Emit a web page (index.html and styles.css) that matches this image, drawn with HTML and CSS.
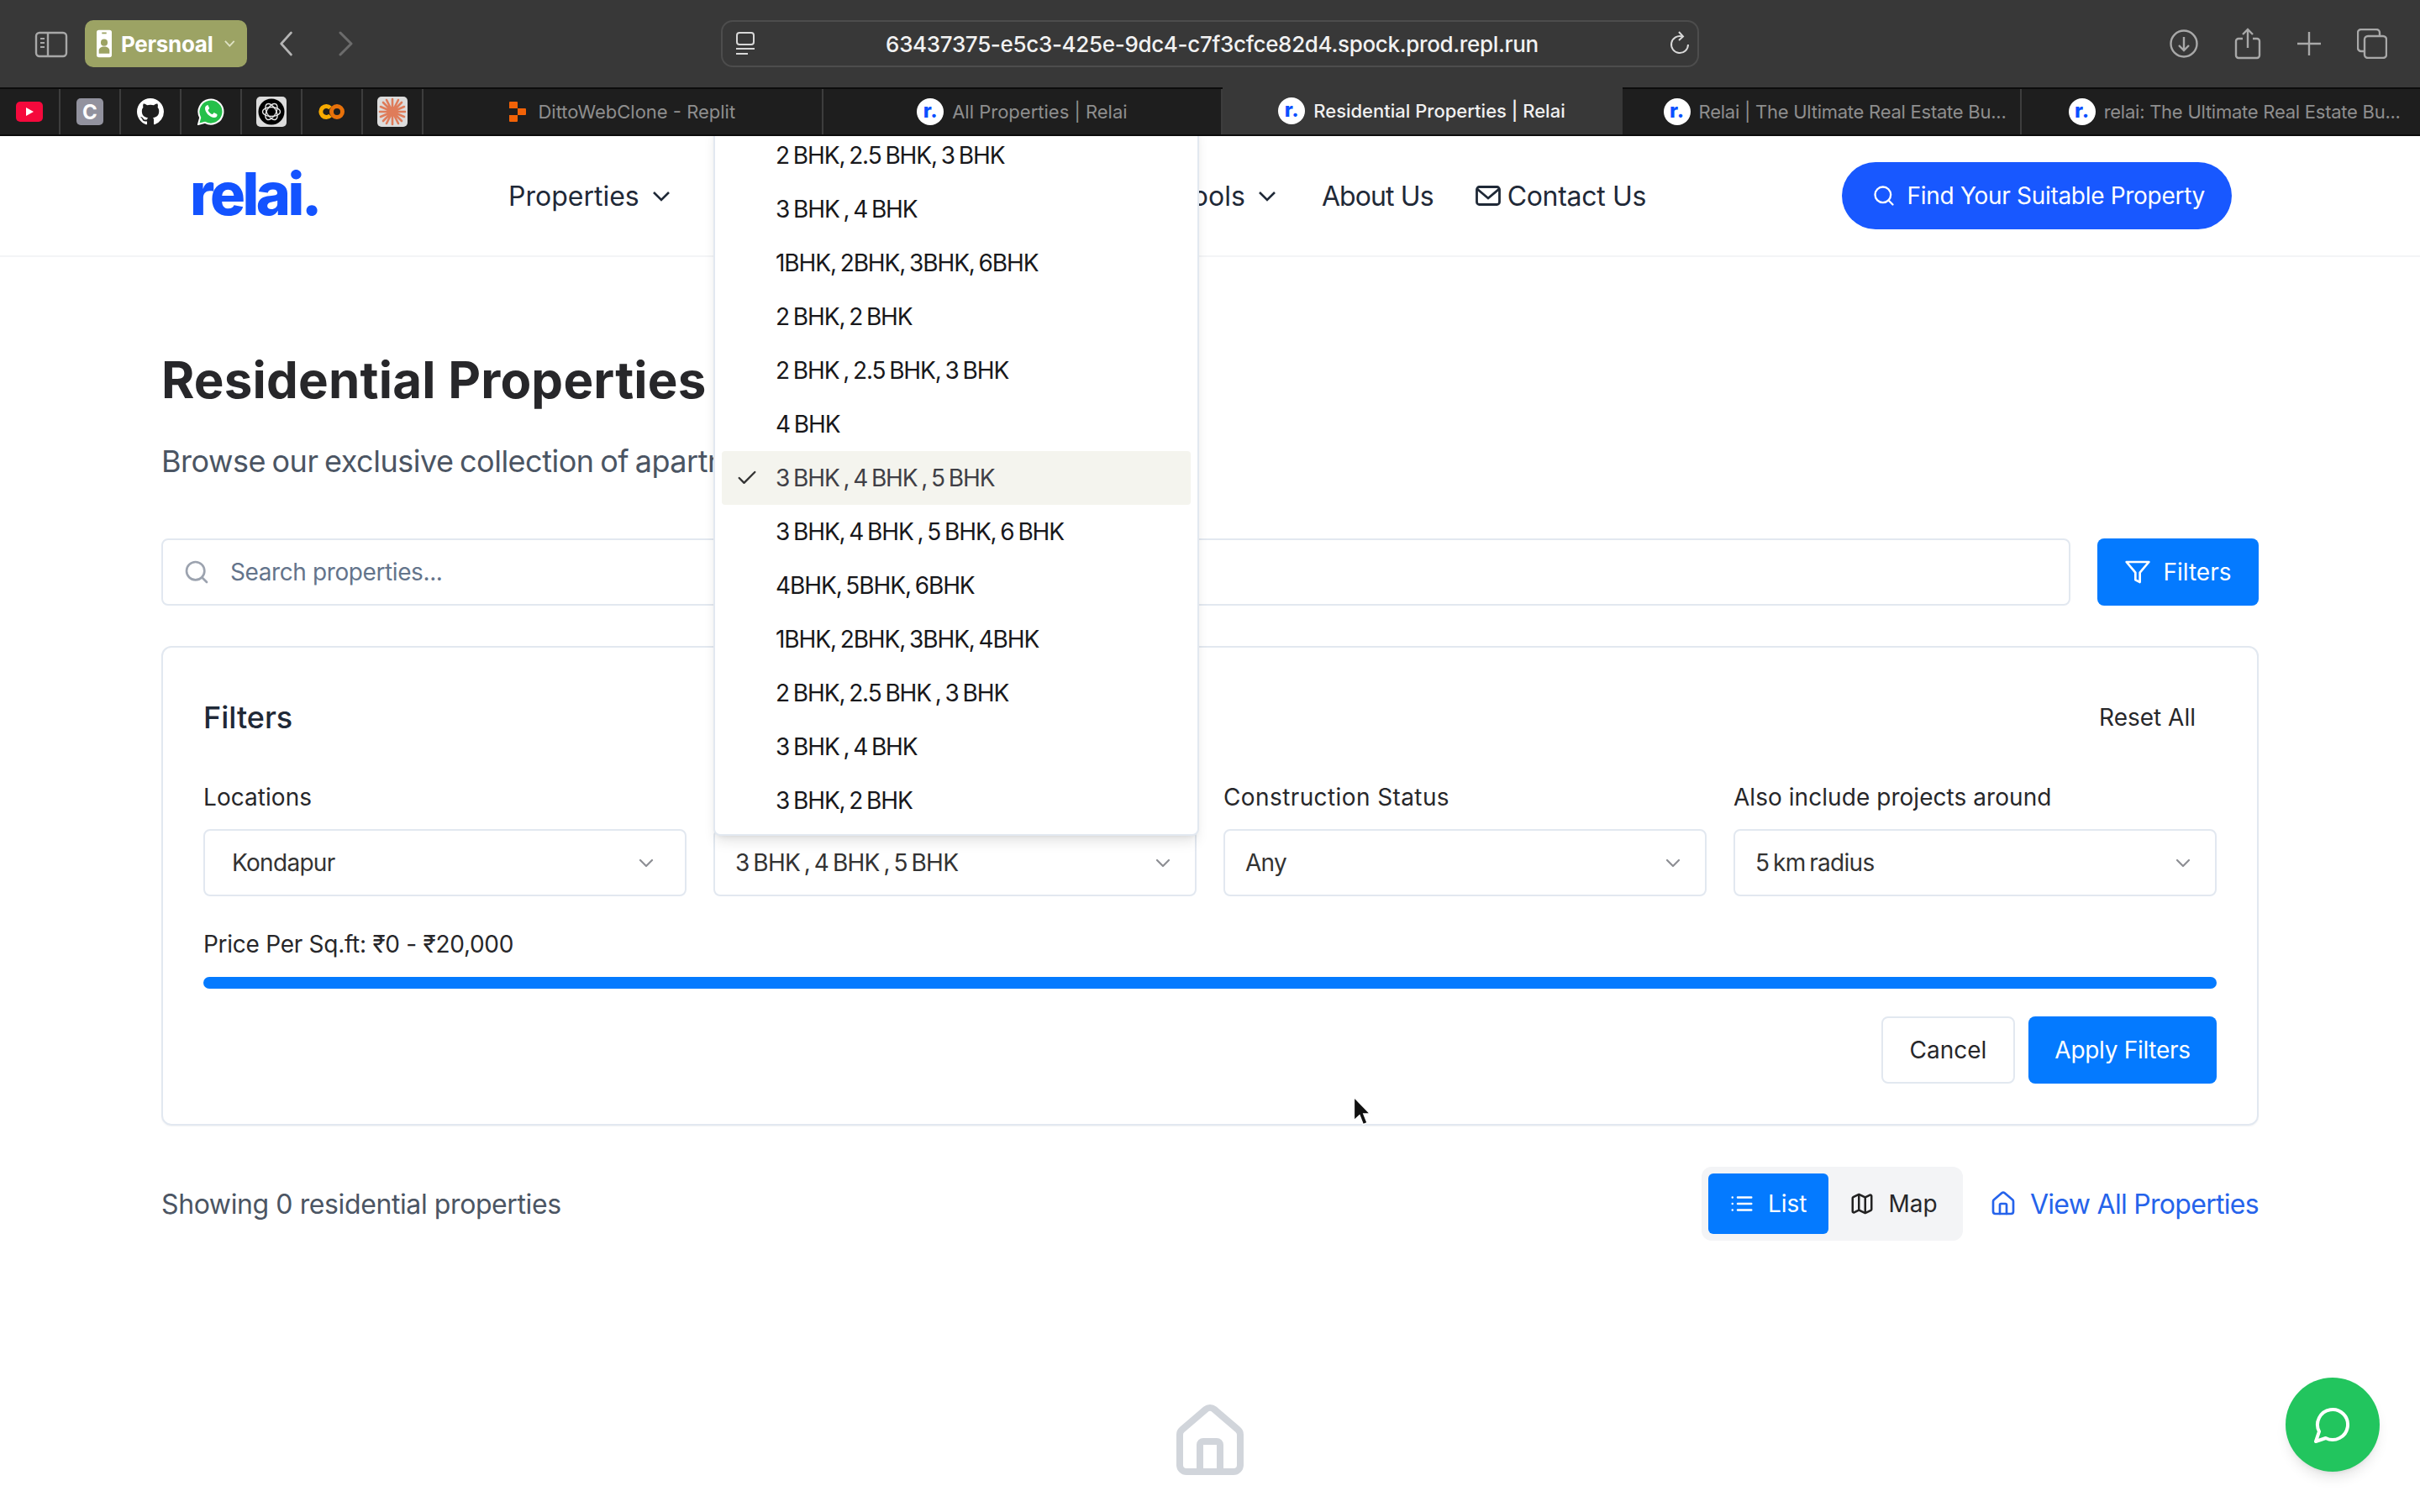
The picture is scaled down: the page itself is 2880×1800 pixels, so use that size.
FILE: index.html
```html
<!DOCTYPE html>
<html lang="en">
<head>
<meta charset="utf-8">
<title>Residential Properties | Relai</title>
<link rel="stylesheet" href="styles.css">
</head>
<body>
<header class="toolbar">
  <svg class="ic-sidebar" width="40" height="32" viewBox="0 0 40 32" fill="none" stroke="#a8a8a8" stroke-width="2.4"><rect x="2" y="2" width="36" height="28" rx="4"/><path d="M16 2v28"/><path d="M7 9h5M7 14h5M7 19h5" stroke-width="2"/></svg>
  <div class="profile">
    <svg width="20" height="36" viewBox="0 0 20 36"><path fill="#fff" fill-rule="evenodd" d="M3 0h14a3 3 0 0 1 3 3v30a3 3 0 0 1-3 3H3a3 3 0 0 1-3-3V3a3 3 0 0 1 3-3zm7 12a4.500 4.500 0 1 0 0 9 4.500 4.500 0 0 0 0-9zM3 31h14v-4c0-3-3-5-7-5s-7 2-7 5z"/><rect x="7" y="3" width="6" height="2" fill="#9ca364"/></svg>
    <span class="profile-name">Persnoal</span>
    <svg width="14" height="10" viewBox="0 0 14 10" fill="none" stroke="#dfe2c4" stroke-width="2"><path d="M1 1.500l6 6.500 6-6.500"/></svg>
  </div>
  <svg class="ic-back" width="18" height="30" viewBox="0 0 18 30" fill="none" stroke="#b5b5b5" stroke-width="3" stroke-linecap="round" stroke-linejoin="round"><path d="M16 2 3 15l13 13" transform="matrix(.9 0 0 1 1 0)"/></svg>
  <svg class="ic-forward" width="18" height="30" viewBox="0 0 18 30" fill="none" stroke="#6c6c6c" stroke-width="3" stroke-linecap="round" stroke-linejoin="round"><path d="M2 2l13 13L2 28"/></svg>
  <div class="urlbar">
    <svg class="ic-site" width="24" height="28" viewBox="0 0 24 28" fill="none" stroke="#d8d8d8" stroke-width="2"><rect x="2" y="1" width="20" height="14" rx="3"/><path d="M1 20h22M1 26h14"/></svg>
    <span class="url">63437375-e5c3-425e-9dc4-c7f3cfce82d4.spock.prod.repl.run</span>
    <svg class="ic-reload" width="26" height="30" viewBox="0 0 26 30" fill="none" stroke="#d8d8d8" stroke-width="2"><path d="M16 6.500A10 10 0 1 0 23 16"/><path d="M12 1l5 5.500-5 4.500"/></svg>
  </div>
  <div class="tool-actions">
    <svg width="34" height="34" viewBox="0 0 34 34" fill="none" stroke="#a8a8a8" stroke-width="2.400"><circle cx="17" cy="17" r="15.500"/><path d="M17 9v16M11 19l6 6 6-6"/></svg>
    <svg width="32" height="38" viewBox="0 0 32 38" fill="none" stroke="#a8a8a8" stroke-width="2.400"><path d="M10 13H5a3 3 0 0 0-3 3v17a3 3 0 0 0 3 3h22a3 3 0 0 0 3-3V16a3 3 0 0 0-3-3h-5"/><path d="M16 24V2M10 8l6-6 6 6"/></svg>
    <svg width="28" height="28" viewBox="0 0 28 28" fill="none" stroke="#a8a8a8" stroke-width="2.400"><path d="M14 0v28M0 14h28"/></svg>
    <svg width="36" height="36" viewBox="0 0 36 36" fill="none" stroke="#a8a8a8" stroke-width="2.400"><rect x="9" y="9" width="26" height="26" rx="4"/><path d="M9 27H5a4 4 0 0 1-4-4V5a4 4 0 0 1 4-4h18a4 4 0 0 1 4 4v4"/></svg>
  </div>
</header>

<nav class="tabbar">
  <div class="pin"><svg width="32" height="24" viewBox="0 0 32 24"><rect width="32" height="24" rx="5" fill="#f5093c"/><path d="M12 7l9 5-9 5z" fill="#fff"/></svg></div>
  <div class="pin"><div class="pin-c">C</div></div>
  <div class="pin"><svg width="32" height="32" viewBox="0 0 16 16"><path fill="#fff" d="M8 0C3.580 0 0 3.580 0 8c0 3.540 2.290 6.530 5.470 7.590.4.070.55-.17.55-.38 0-.19-.01-.82-.01-1.490-2.010.37-2.530-.49-2.690-.94-.09-.23-.48-.94-.82-1.130-.28-.15-.68-.52-.01-.53.630-.01 1.080.58 1.230.82.720 1.210 1.870.87 2.330.66.070-.52.280-.87.510-1.070-1.780-.2-3.640-.89-3.640-3.950 0-.87.310-1.590.82-2.150-.08-.2-.36-1.020.08-2.120 0 0 .67-.21 2.200.82.640-.18 1.320-.27 2-.27s1.360.09 2 .27c1.530-1.040 2.200-.82 2.200-.82.440 1.100.160 1.920.08 2.120.51.560.82 1.270.82 2.150 0 3.070-1.870 3.750-3.650 3.950.29.250.54.730.54 1.480 0 1.070-.01 1.930-.01 2.200 0 .21.150.46.550.38A8.010 8.010 0 0 0 16 8c0-4.420-3.580-8-8-8z"/></svg></div>
  <div class="pin"><svg width="32" height="32" viewBox="0 0 32 32"><path d="M1 31l2.200-8A14.500 14.500 0 1 1 9 28.800z" fill="#25c04a" stroke="#fff" stroke-width="2"/><path d="M11.500 8.500c-1 0-2.500 1.500-2.500 3.500 0 5 6 11 11 11 2 0 3.500-1.500 3.500-2.500s0-1.500-.5-1.700l-3-1.500c-.7-.3-1 .5-1.800 1.500-.4.400-.8.300-1.500-.1-1.800-.9-3-2.100-3.900-3.900-.3-.6-.2-1 .2-1.400.7-.7 1.300-1 1-1.800l-1.300-3c-.2-.5-.7-.6-1.200-.6z" fill="#fff"/></svg></div>
  <div class="pin"><svg width="36" height="36" viewBox="0 0 36 36"><rect width="36" height="36" rx="5" fill="#dcdcdc"/><circle cx="18" cy="18" r="15.500" fill="#000"/><g fill="none" stroke="#e6e6e6" stroke-width="1.300"><ellipse cx="18" cy="18" rx="10.500" ry="5.500"/><ellipse cx="18" cy="18" rx="10.500" ry="5.500" transform="rotate(60 18 18)"/><ellipse cx="18" cy="18" rx="10.500" ry="5.500" transform="rotate(120 18 18)"/></g></svg></div>
  <div class="pin"><svg width="32" height="18" viewBox="0 0 32 18" fill="none" stroke-width="5"><path d="M14 4.500A6.500 6.500 0 1 0 14 13.500" stroke="#f9ab00"/><circle cx="22" cy="9" r="6.500" stroke="#e8710a"/></svg></div>
  <div class="pin"><svg width="36" height="36" viewBox="0 0 36 36"><rect width="36" height="36" rx="5" fill="#dcdcdc"/><g stroke="#df7c5a" stroke-width="2.600" stroke-linecap="round"><path d="M18 3v30M3 18h30M7 7l22 22M29 7 7 29M11 4l14 28M25 4 11 32M4 12l28 12M32 12 4 24"/></g></svg></div>
  <div class="tab">
    <svg class="replit" width="20" height="24" viewBox="0 0 20 24"><path fill="#f26207" d="M0 1a1 1 0 0 1 1-1h8a1 1 0 0 1 1 1v7H0zM10 8h9a1 1 0 0 1 1 1v6a1 1 0 0 1-1 1h-9zM0 16h10v7a1 1 0 0 1-1 1H1a1 1 0 0 1-1-1z"/></svg>
    <span class="tab-label">DittoWebClone - Replit</span>
  </div>
  <div class="tab"><span class="favicon">r.</span><span class="tab-label">All Properties | Relai</span></div>
  <div class="tab tab-active"><span class="favicon">r.</span><span class="tab-label">Residential Properties | Relai</span></div>
  <div class="tab tab-long"><span class="favicon">r.</span><span class="tab-label">Relai | The Ultimate Real Estate Bu...</span></div>
  <div class="tab tab-long"><span class="favicon">r.</span><span class="tab-label">relai: The Ultimate Real Estate Bu...</span></div>
</nav>

<div class="page">
  <div class="sitenav">
    <div class="logo">relai.</div>
    <a class="navlink nav-properties">Properties <svg class="chev" width="22" height="14" viewBox="0 0 22 14" fill="none" stroke="currentColor" stroke-width="2.600"><path d="M2 2l9 9 9-9"/></svg></a>
    <a class="navlink nav-tools">Tools <svg class="chev" width="22" height="14" viewBox="0 0 22 14" fill="none" stroke="currentColor" stroke-width="2.600"><path d="M2 2l9 9 9-9"/></svg></a>
    <a class="navlink nav-about">About Us</a>
    <a class="navlink nav-contact"><svg width="30" height="24" viewBox="0 0 30 24" fill="none" stroke="currentColor" stroke-width="2.800"><rect x="1.500" y="1.500" width="27" height="21" rx="3"/><path d="M2 4l13 11 13-11"/></svg>Contact Us</a>
    <a class="cta"><svg width="28" height="28" viewBox="0 0 24 24" fill="none" stroke="#fff" stroke-width="2" stroke-linecap="round"><circle cx="11" cy="11" r="8"/><path d="m21 21-4.300-4.300"/></svg>Find Your Suitable Property</a>
  </div>

  <main class="content">
    <h1 class="title">Residential Properties</h1>
    <p class="subtitle">Browse our exclusive collection of apartments and villas</p>

    <div class="search-row">
      <div class="search">
        <svg width="32" height="32" viewBox="0 0 24 24" fill="none" stroke="#9ca3af" stroke-width="2" stroke-linecap="round"><circle cx="11" cy="11" r="8"/><path d="m21 21-4.300-4.300"/></svg>
        <span class="placeholder">Search properties...</span>
      </div>
      <button class="btn btn-primary btn-filters"><svg width="32" height="32" viewBox="0 0 24 24" fill="none" stroke="#fff" stroke-width="2" stroke-linecap="round" stroke-linejoin="round"><path d="M22 3H2l8 9.460V19l4 2v-8.540z"/></svg>Filters</button>
    </div>

    <section class="panel">
      <div class="panel-head">
        <h2 class="panel-title">Filters</h2>
        <span class="reset">Reset All</span>
      </div>
      <div class="fields">
        <div class="field">
          <label class="field-label">Locations</label>
          <div class="select select-wide"><span>Kondapur</span><svg class="sel-chev" width="24" height="24" viewBox="0 0 24 24" fill="none" stroke="#8d8f94" stroke-width="2.200" stroke-linecap="round" stroke-linejoin="round"><path d="m5 9 7 7 7-7"/></svg></div>
        </div>
        <div class="field">
          <div class="field-label"></div>
          <div class="select"><span>3 BHK , 4 BHK , 5 BHK</span><svg class="sel-chev" width="24" height="24" viewBox="0 0 24 24" fill="none" stroke="#8d8f94" stroke-width="2.200" stroke-linecap="round" stroke-linejoin="round"><path d="m5 9 7 7 7-7"/></svg></div>
          <ul class="menu">
            <li>2 BHK, 2.5 BHK, 3 BHK</li>
            <li>3 BHK , 4 BHK</li>
            <li>1BHK, 2BHK, 3BHK, 6BHK</li>
            <li>2 BHK, 2 BHK</li>
            <li>2 BHK , 2.5 BHK, 3 BHK</li>
            <li>4 BHK</li>
            <li class="selected"><svg class="check" width="28" height="28" viewBox="0 0 24 24" fill="none" stroke="#333" stroke-width="2" stroke-linecap="round" stroke-linejoin="round"><path d="M20 6 9 17l-5-5"/></svg>3 BHK , 4 BHK , 5 BHK</li>
            <li>3 BHK, 4 BHK , 5 BHK, 6 BHK</li>
            <li>4BHK, 5BHK, 6BHK</li>
            <li>1BHK, 2BHK, 3BHK, 4BHK</li>
            <li>2 BHK, 2.5 BHK , 3 BHK</li>
            <li>3 BHK , 4 BHK</li>
            <li>3 BHK, 2 BHK</li>
          </ul>
        </div>
        <div class="field">
          <label class="field-label label-status">Construction Status</label>
          <div class="select"><span>Any</span><svg class="sel-chev" width="24" height="24" viewBox="0 0 24 24" fill="none" stroke="#8d8f94" stroke-width="2.200" stroke-linecap="round" stroke-linejoin="round"><path d="m5 9 7 7 7-7"/></svg></div>
        </div>
        <div class="field">
          <label class="field-label">Also include projects around</label>
          <div class="select"><span>5 km radius</span><svg class="sel-chev" width="24" height="24" viewBox="0 0 24 24" fill="none" stroke="#8d8f94" stroke-width="2.200" stroke-linecap="round" stroke-linejoin="round"><path d="m5 9 7 7 7-7"/></svg></div>
        </div>
      </div>
      <div class="price-label">Price Per Sq.ft: ₹0 - ₹20,000</div>
      <div class="slider"></div>
      <div class="panel-actions">
        <button class="btn btn-outline">Cancel</button>
        <button class="btn btn-primary btn-apply">Apply Filters</button>
      </div>
    </section>

    <div class="results-row">
      <span class="count">Showing 0 residential properties</span>
      <div class="toggle">
        <span class="toggle-item toggle-on"><svg width="30" height="30" viewBox="0 0 24 24" fill="none" stroke="#fff" stroke-width="2" stroke-linecap="round"><path d="M8 6h13M8 12h13M8 18h13M3 6h.01M3 12h.01M3 18h.01"/></svg>List</span>
        <span class="toggle-item"><svg width="30" height="30" viewBox="0 0 24 24" fill="none" stroke="#222" stroke-width="2" stroke-linecap="round" stroke-linejoin="round"><path d="M14.106 5.553a2 2 0 0 0 1.788 0l3.659-1.830A1 1 0 0 1 21 4.619v12.764a1 1 0 0 1-.553.894l-4.553 2.277a2 2 0 0 1-1.788 0l-4.212-2.106a2 2 0 0 0-1.788 0l-3.659 1.830A1 1 0 0 1 3 19.381V6.618a1 1 0 0 1 .553-.894l4.553-2.277a2 2 0 0 1 1.788 0z"/><path d="M15 5.764v15M9 3.236v15"/></svg>Map</span>
      </div>
      <a class="viewall"><svg width="32" height="32" viewBox="0 0 24 24" fill="none" stroke="#2563eb" stroke-width="2" stroke-linecap="round" stroke-linejoin="round"><path d="M15 21v-8a1 1 0 0 0-1-1h-4a1 1 0 0 0-1 1v8"/><path d="M3 10a2 2 0 0 1 .709-1.528l7-5.999a2 2 0 0 1 2.582 0l7 5.999A2 2 0 0 1 21 10v9a2 2 0 0 1-2 2H5a2 2 0 0 1-2-2z"/></svg>View All Properties</a>
    </div>

    <div class="empty">
      <svg width="96" height="96" viewBox="0 0 24 24" fill="none" stroke="#d1d5db" stroke-width="2" stroke-linecap="round" stroke-linejoin="round"><path d="M15 21v-8a1 1 0 0 0-1-1h-4a1 1 0 0 0-1 1v8"/><path d="M3 10a2 2 0 0 1 .709-1.528l7-5.999a2 2 0 0 1 2.582 0l7 5.999A2 2 0 0 1 21 10v9a2 2 0 0 1-2 2H5a2 2 0 0 1-2-2z"/></svg>
    </div>
  </main>

  <div class="chat"><svg width="48" height="48" viewBox="0 0 24 24" fill="none" stroke="#fff" stroke-width="2" stroke-linecap="round" stroke-linejoin="round"><path d="M7.900 20A9 9 0 1 0 4 16.100L2 22z"/></svg></div>
  <svg class="cursor" width="22" height="36" viewBox="0 0 18 30"><path d="M1 1v23l5.500-5 3.500 9 4-1.700-3.500-8.800H17z" fill="#111" stroke="#fff" stroke-width="1.200"/></svg>
</div>
</body>
</html>
```
FILE: styles.css
```css
* { box-sizing: border-box; }
html, body { margin: 0; height: 100%; }
body {
  width: 2880px;
  height: 1800px;
  overflow: hidden;
  display: flex;
  flex-direction: column;
  font-family: Inter, "Noto Sans", sans-serif;
  color: #1f2937;
  background: #fff;
}

/* Browser chrome */
.toolbar {
  height: 104px;
  flex: none;
  background: #383838;
  display: flex;
  align-items: center;
  padding: 0 39px 0 41px;
}
.ic-sidebar { margin-top: 2px; }
.profile {
  margin-left: 20px;
  width: 193px;
  height: 56px;
  border-radius: 10px;
  background: #9ca364;
  display: flex;
  align-items: center;
  padding: 0 14px;
  gap: 11px;
}
.profile-name { font-size: 26px; font-weight: 700; color: #fff; letter-spacing: -.3px; margin-right: 3px; }
.ic-back { margin-left: 37px; }
.ic-forward { margin-left: 54px; }
.urlbar {
  margin-left: 437px;
  width: 1164px;
  height: 56px;
  border: 2px solid #4d4d4d;
  border-radius: 14px;
  display: flex;
  align-items: center;
  padding: 0 8px 0 15px;
}
.url { flex: 1; text-align: center; font-size: 26px; font-weight: 500; color: #f2f2f2; letter-spacing: -.33px; }
.tool-actions { margin-left: auto; display: flex; align-items: center; gap: 43px; }

.tabbar {
  height: 58px;
  flex: none;
  display: flex;
  background: #1e1e1e;
  border-top: 2px solid #0c0c0c;
  border-bottom: 2px solid #0c0c0c;
}
.pin {
  width: 72px;
  flex: none;
  display: flex;
  align-items: center;
  justify-content: center;
  border-right: 2px solid #3d3d3d;
}
.pin-c {
  width: 32px; height: 32px; border-radius: 5px;
  background: #92929e; color: #fff;
  font-size: 24px; font-weight: 700;
  display: flex; align-items: center; justify-content: center;
}
.tab {
  flex: 1 1 0;
  display: flex;
  align-items: center;
  justify-content: center;
  gap: 10px;
  border-right: 2px solid #3d3d3d;
  min-width: 0;
}
.tab:last-child { border-right: 0; }
.tab-active { background: #383838; border-right-color: #383838; margin-top: -2px; }
.tab-label { font-size: 22px; color: #8e8e8e; white-space: nowrap; }
.tab-active .tab-label { color: #f0f0f0; font-weight: 500; }
.tab-long .favicon { margin-left: 32px; }
.tab-long .tab-label { letter-spacing: -.25px; }
.replit { margin-right: 4px; }
.favicon {
  width: 32px; height: 32px; flex: none; border-radius: 50%;
  background: #fff; color: #0b50ff;
  font-size: 24px; font-weight: 800; line-height: 30px; text-align: center;
}

/* Page */
.page { position: relative; flex: 1; min-height: 0; overflow: hidden; }
.sitenav {
  height: 144px;
  border-bottom: 2px solid #f3f4f6;
  display: flex;
  align-items: center;
  padding: 0 224px 0 226px;
}
.logo { font-size: 70px; font-weight: 800; color: #1353ff; letter-spacing: -3.500px; line-height: 1; margin-top: -4px; }
.navlink { font-size: 32px; color: #1f2937; display: flex; align-items: center; gap: 15px; white-space: nowrap; }
.chev { margin-top: 2px; }
.nav-properties { margin-left: 225px; }
.nav-tools { margin-left: 603px; }
.nav-about { margin-left: 54px; letter-spacing: -.9px; }
.nav-contact { margin-left: 50px; gap: 8px; letter-spacing: -.3px; }
.cta {
  margin-left: auto;
  height: 80px;
  padding: 0 32px 0 36px;
  border-radius: 40px;
  background: #1858ff;
  color: #fff;
  font-size: 28px;
  letter-spacing: -.3px;
  display: flex;
  align-items: center;
  gap: 14px;
}

.content { padding: 0 192px; }
.title { margin: 110px 0 0; font-size: 60px; line-height: 72px; font-weight: 700; color: #27272a; letter-spacing: .2px; }
.subtitle {
  margin: 37px 0 0;
  width: 657px;
  overflow: hidden;
  font-size: 36px;
  line-height: 48px;
  color: #4b5563;
  white-space: nowrap;
  letter-spacing: -.5px;
  word-spacing: -2px;
}

.search-row { display: flex; gap: 32px; margin-top: 68px; }
.search {
  flex: 1;
  height: 80px;
  border: 2px solid #e2e8f0;
  border-radius: 8px;
  display: flex;
  align-items: center;
  padding-left: 24px;
  gap: 24px;
}
.placeholder { font-size: 28px; color: #64748b; letter-spacing: -.4px; }
.btn {
  font-family: inherit;
  font-size: 28px;
  font-weight: 400;
  border-radius: 8px;
  border: 0;
  height: 80px;
  display: flex;
  align-items: center;
  justify-content: center;
}
.btn-primary { background: #047aff; color: #fff; }
.btn-filters { width: 192px; gap: 14px; }

.panel {
  margin-top: 48px;
  height: 571px;
  border: 2px solid #e2e8f0;
  border-radius: 12px;
  box-shadow: 0 1px 2px rgba(0,0,0,.05);
  padding: 0 48px;
}
.panel-head { display: flex; justify-content: space-between; align-items: center; height: 62px; margin-top: 52px; padding-right: 25px; }
.panel-title { margin: 0; font-size: 36px; font-weight: 500; color: #1f2937; }
.reset { font-size: 28px; color: #27272a; }
.fields { display: grid; grid-template-columns: repeat(4, 1fr); gap: 32px; margin-top: 44px; }
.field { position: relative; }
.field-label { display: block; height: 40px; line-height: 40px; font-size: 28px; color: #27272a; letter-spacing: .05px; }
.label-status { letter-spacing: .4px; }
.select {
  margin-top: 18px;
  height: 80px;
  border: 2px solid #e2e8f0;
  border-radius: 8px;
  display: flex;
  align-items: center;
  justify-content: space-between;
  padding: 0 26px 0 24px;
  font-size: 28px;
  color: #333;
  letter-spacing: -.7px;
  word-spacing: -2.500px;
}
.select-wide { padding: 0 34px 0 32px; }
.menu {
  position: absolute;
  left: 0;
  right: -3px;
  bottom: 72px;
  margin: 0;
  padding: 8px;
  list-style: none;
  background: #fff;
  border: 2px solid #e2e8f0;
  border-radius: 8px;
  box-shadow: 0 10px 15px -3px rgba(0,0,0,.1), 0 4px 6px -4px rgba(0,0,0,.1);
  z-index: 5;
}
.menu li {
  position: relative;
  height: 64px;
  line-height: 64px;
  padding-left: 64px;
  font-size: 28px;
  color: #18181b;
  border-radius: 4px;
  white-space: nowrap;
  letter-spacing: -1.100px;
  word-spacing: -2px;
}
.menu .selected { background: #f4f4ee; color: #3f3f46; }
.check { position: absolute; left: 16px; top: 18px; }

.price-label { margin-top: 37px; height: 40px; line-height: 40px; font-size: 28px; color: #27272a; letter-spacing: -.27px; }
.slider { margin-top: 19px; height: 14px; border-radius: 7px; background: #047aff; }
.panel-actions { display: flex; justify-content: flex-end; gap: 16px; margin-top: 33px; }
.btn-outline { width: 159px; background: #fff; border: 2px solid #e2e8f0; color: #27272a; }
.btn-apply { width: 224px; letter-spacing: -.3px; }

.results-row { display: flex; align-items: center; margin-top: 49px; height: 88px; }
.count { font-size: 32px; color: #4b5563; margin-right: auto; letter-spacing: -.4px; }
.toggle { width: 311px; height: 88px; background: #f3f4f6; border-radius: 12px; padding: 8px; display: flex; }
.toggle-item { display: flex; align-items: center; gap: 16px; font-size: 28px; color: #27272a; padding: 0 26px 0 25px; border-radius: 6px; }
.toggle-on { background: #047aff; color: #fff; }
.viewall { margin-left: 32px; display: flex; align-items: center; gap: 16px; font-size: 32px; color: #2563eb; white-space: nowrap; letter-spacing: -.7px; }

.empty { display: flex; justify-content: center; margin-top: 191px; }

.chat {
  position: absolute; left: 2720px; top: 1478px;
  width: 112px; height: 112px; border-radius: 50%;
  background: #22c55e;
  display: flex; align-items: center; justify-content: center;
  box-shadow: 0 10px 15px -3px rgba(0,0,0,.1), 0 4px 6px -4px rgba(0,0,0,.1);
}
.cursor { position: absolute; left: 1610px; top: 1143px; z-index: 9; }
```
